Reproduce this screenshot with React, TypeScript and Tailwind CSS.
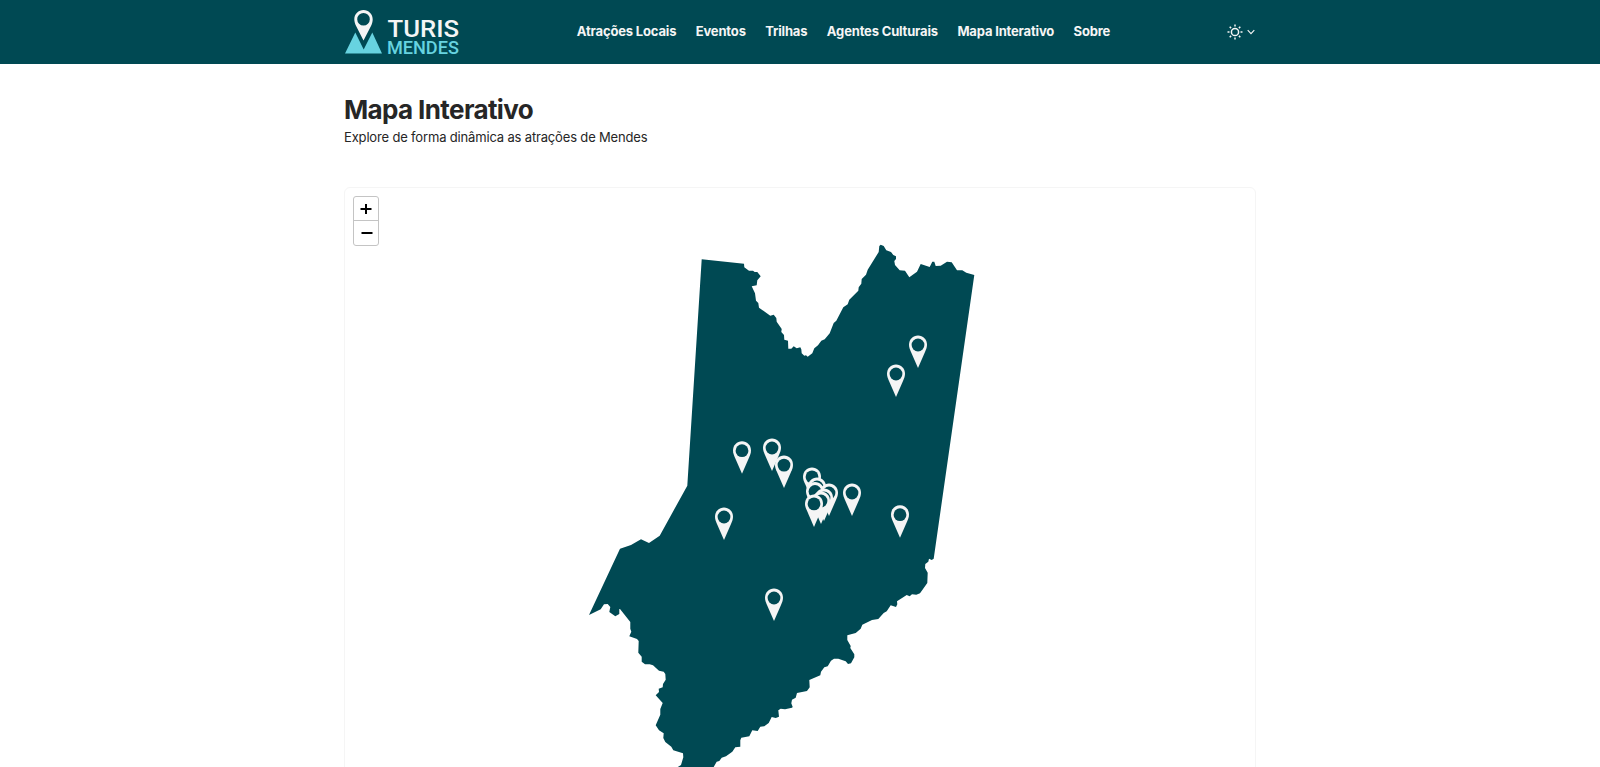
import React from "react";

type Point = [number, number];

interface Section {
  origin: Point;
  points: Point[];
}

const NAV_ITEMS = [
  "Atrações Locais",
  "Eventos",
  "Trilhas",
  "Agentes Culturais",
  "Mapa Interativo",
  "Sobre",
];

/* Municipality border, clockwise, in thirds of a map unit from each section's origin. */
const BORDER: Section[] = [
  {
    origin: [680, 230],
    points: [
      [65, 88], [192, 101], [193, 112], [207, 122], [219, 122], [224, 126], [232, 126], [242, 139],
      [232, 151], [230, 166], [215, 169], [225, 190], [228, 212], [235, 219], [237, 233], [271, 257],
      [281, 254], [289, 264], [290, 275], [305, 297], [304, 306], [312, 315], [313, 329], [324, 332],
      [325, 356], [334, 356], [341, 349], [350, 355], [361, 352], [364, 358], [365, 370], [373, 377],
      [378, 376], [383, 380], [397, 370], [403, 355], [414, 346], [424, 332], [434, 328], [449, 310],
      [461, 279], [469, 272], [490, 232], [503, 223], [508, 209], [535, 182], [536, 172], [544, 161],
      [545, 147], [558, 134], [563, 119], [596, 66], [598, 48], [602, 44], [611, 48], [619, 61],
      [633, 66], [640, 75], [648, 79], [648, 87], [643, 93], [645, 105], [659, 121], [675, 122],
      [688, 142], [711, 125], [722, 102], [749, 111], [757, 95], [763, 95], [767, 108], [782, 107],
      [801, 95], [815, 97], [831, 121], [847, 121], [859, 128], [883, 135],
    ],
  },
  {
    origin: [780, 540],
    points: [
      [461, 56], [455, 60], [447, 56], [445, 65], [436, 72], [435, 84], [443, 98], [442, 129],
      [420, 160], [409, 164], [396, 163], [389, 169], [380, 165], [351, 184], [352, 193], [348, 201],
      [332, 196], [320, 214], [311, 219], [295, 237], [276, 240], [247, 254], [242, 266], [227, 279],
      [202, 286], [202, 300], [212, 318], [211, 324], [223, 343], [223, 352], [213, 370], [204, 372],
      [197, 364], [175, 356], [162, 356], [153, 362], [143, 379], [133, 382], [123, 395], [121, 406],
      [88, 420], [89, 442], [81, 453], [51, 459], [47, 473], [36, 479], [34, 490], [38, 501],
    ],
  },
  {
    origin: [620, 600],
    points: [
      [516, 323], [495, 328], [482, 326], [475, 331], [477, 350], [467, 354], [455, 351], [446, 369],
      [433, 379], [421, 380], [413, 393], [397, 391], [388, 409], [364, 413], [361, 421], [361, 440],
      [346, 442], [337, 455], [318, 469], [305, 473], [298, 483], [290, 485], [278, 506], [250, 530],
      [180, 530], [172, 502], [183, 495], [190, 472], [189, 460], [160, 451], [154, 440], [136, 426],
      [130, 414], [131, 400], [117, 391], [107, 376], [121, 344], [121, 327], [128, 309], [107, 286],
      [117, 276], [116, 266], [128, 262], [129, 252], [137, 239], [136, 222], [131, 215], [117, 212],
      [99, 196], [89, 193], [75, 193], [65, 185], [65, 170], [55, 158], [56, 123], [51, 117],
      [28, 109], [34, 95], [31, 86], [31, 66], [0, 27],
    ],
  },
  {
    origin: [580, 470],
    points: [
      [118, 417], [118, 432], [106, 439], [88, 426], [91, 411], [83, 402], [72, 403], [62, 418],
      [27, 435], [120, 236], [153, 225], [183, 208], [207, 219], [239, 197], [322, 47],
    ],
  },
];

const MAP_LEFT = 345;
const MAP_TOP = 188;

const borderPoints = BORDER.flatMap(({ origin, points }) =>
  points.map(([x, y]) => `${(origin[0] + x / 3).toFixed(1)},${(origin[1] + y / 3).toFixed(1)}`),
).join(" ");

/* Top centre of each pin, drawn from north to south. */
const PINS: Point[] = [
  [918, 335.5],
  [896, 364.5],
  [772, 438.5],
  [742, 441.2],
  [784, 455.6],
  [812, 467.4],
  [817, 477.5],
  [829, 483.5],
  [815, 482],
  [852, 483.5],
  [824, 488.5],
  [821, 491.5],
  [814, 494.4],
  [900, 505.2],
  [724, 507.5],
  [774, 588.5],
];

function Logo() {
  return (
    <svg width="116" height="52" viewBox="0 -3 116 52" className="block" aria-label="Turis Mendes">
      <path d="M1 44.500 11.300 23.400 19.700 40.500 28.300 23.400 38 44.500Z" fill="#67d3e0" />
      <path
        fillRule="evenodd"
        fill="#f5f5f5"
        d="M19.500 1C14.500 1 10.300 5 10.300 10.200c0 2.500.8 4.600 1.800 6.800L19.500 31.500 27 17C28 14.800 28.700 12.700 28.700 10.200 28.700 5 24.500 1 19.500 1Zm0 2.900a6.300 6.300 0 1 1 0 12.600 6.300 6.300 0 0 1 0-12.600Z"
      />
      <text x="43.500" y="28" fill="#f5f5f5" fontFamily="Roboto, sans-serif" fontSize="24.500" fontWeight="500" textLength="71.500" lengthAdjust="spacingAndGlyphs">
        TURIS
      </text>
      <text x="42.900" y="45" fill="#67d3e0" fontFamily="Roboto, sans-serif" fontSize="17.500" fontWeight="500" textLength="72" lengthAdjust="spacingAndGlyphs">
        MENDES
      </text>
    </svg>
  );
}

function ThemeButton() {
  return (
    <button className="flex items-center gap-1 pr-px text-neutral-100" aria-label="Tema">
      <svg width="16" height="16" viewBox="0 0 16 16" fill="none" stroke="currentColor" strokeWidth="1.500">
        <circle cx="8" cy="8" r="3.600" />
        <path d="M8 .5v2M8 13.500v2M.5 8h2M13.500 8h2M2.700 2.700l1.400 1.400M11.900 11.900l1.400 1.400M2.700 13.300l1.400-1.400M11.900 4.100l1.400-1.400" />
      </svg>
      <svg width="8" height="8" viewBox="0 0 8 8" fill="none" stroke="currentColor" strokeWidth="1.100">
        <path d="M.7 2.200 4 5.700 7.300 2.200" />
      </svg>
    </button>
  );
}

function Header() {
  return (
    <header className="h-16 bg-[#004953]">
      <div className="mx-auto flex h-full w-[912px] items-center justify-between">
        <Logo />
        <nav className="flex gap-[19.5px] text-[13px] font-bold tracking-[-0.17px] text-neutral-100">
          {NAV_ITEMS.map((item) => (
            <a key={item} href="#" className="whitespace-nowrap">
              {item}
            </a>
          ))}
        </nav>
        <ThemeButton />
      </div>
    </header>
  );
}

function ZoomControl() {
  return (
    <div className="absolute top-2 left-2 flex w-[26px] flex-col rounded-[3px] border border-[#c4c4c4] bg-white">
      <button className="flex h-6 items-center justify-center border-b border-[#c4c4c4]" aria-label="Aproximar">
        <svg width="12" height="12" viewBox="0 0 12 12" stroke="#000" strokeWidth="2">
          <path d="M6 1v10M.5 6h11" />
        </svg>
      </button>
      <button className="flex h-6 items-center justify-center pl-px" aria-label="Afastar">
        <svg width="12" height="12" viewBox="0 0 12 12" stroke="#000" strokeWidth="2">
          <path d="M.5 6h11" />
        </svg>
      </button>
    </div>
  );
}

function CityMap() {
  return (
    <div className="relative h-[640px] overflow-hidden rounded-md border border-neutral-100">
      <svg width="910" height="638" viewBox={`${MAP_LEFT} ${MAP_TOP} 910 638`} className="block">
        <polygon points={borderPoints} fill="#004953" />
        {PINS.map(([x, y]) => (
          <g key={`${x}-${y}`} transform={`translate(${x} ${y})`}>
            <path
              fill="#f5f5f5"
              d="M0 0C-5 0-9 4-9 9.300c0 2.500.9 4.600 1.900 6.900L0 32.500 7.100 16.200C8.100 13.900 9 11.800 9 9.300 9 4 5 0 0 0Z"
            />
            <circle cy="9.500" r="6.400" fill="#004953" />
          </g>
        ))}
      </svg>
      <ZoomControl />
    </div>
  );
}

export default function App() {
  return (
    <div className="h-screen overflow-hidden bg-white font-['Inter',sans-serif] text-neutral-800">
      <Header />
      <main className="mx-auto w-[912px] pt-[29px]">
        <h1 className="text-[26px] leading-[34px] font-bold tracking-[-0.62px]">Mapa Interativo</h1>
        <p className="mb-10 text-[13px] leading-5 tracking-[-0.165px]">
          Explore de forma dinâmica as atrações de Mendes
        </p>
        <CityMap />
      </main>
    </div>
  );
}
